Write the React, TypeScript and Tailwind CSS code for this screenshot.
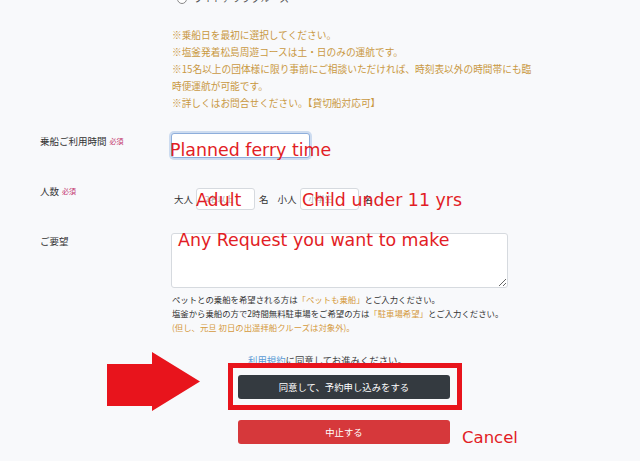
import React from 'react';

const jp = { fontFamily: '"Noto Sans CJK JP", "Noto Sans", sans-serif' };
const note = { fontFamily: '"DejaVu Sans", Verdana, sans-serif' };

const Label: React.FC<{ text: string; required?: boolean }> = ({ text, required }) => (
  <div className="flex items-center gap-[3px] text-[9.5px] leading-[17px] text-[#333]">
    <span>{text}</span>
    {required && <span className="text-[7px] text-[#c2336b]">必須</span>}
  </div>
);

export default function App() {
  return (
    <div className="min-h-screen bg-[#f8f9fb] overflow-hidden" style={jp}>
      <div className="grid grid-cols-[131px_1fr] pl-[40px]">
        {/* course radio + notes */}
        <div />
        <div>
          <div className="-mt-[10px] flex h-[17px] items-center gap-[6px] pl-[6px] text-[9.7px] leading-[17px] text-[#555]">
            <span className="inline-block h-[10px] w-[10px] rounded-full border border-[#888] bg-white" />
            <span>ライトアップクルーズ</span>
          </div>
          <div className="mt-[20px] pl-[1px] text-[9.7px] leading-[17px] text-[#c99842]">
            <p>※乗船日を最初に選択してください。</p>
            <p>※塩釜発着松島周遊コースは土・日のみの運航です。</p>
            <p>※15名以上の団体様に限り事前にご相談いただければ、時刻表以外の時間帯にも臨</p>
            <p>時便運航が可能です。</p>
            <p>※詳しくはお問合せください。【貸切船対応可】</p>
          </div>
        </div>

        {/* time */}
        <div className="mt-[21px]">
          <Label text="乗船ご利用時間" required />
        </div>
        <div className="mt-[21px]">
          <div className="relative w-[139px]">
            <div className="h-[25px] rounded-[3px] border border-[#8eaedb] bg-white shadow-[0_0_0_2px_#cddcf0]" />
            <span className="absolute left-[-1px] top-[7px] whitespace-nowrap text-[17.4px] leading-[20px] text-[#e21d25]" style={note}>
              Planned ferry time
            </span>
          </div>
        </div>

        {/* people */}
        <div className="mt-[25px]">
          <Label text="人数" required />
        </div>
        <div className="mt-[25px] pt-[5px]">
          <div className="relative flex items-center text-[9.5px] text-[#333]">
            <span className="ml-[3px]">大人</span>
            <div className="ml-[3px] flex h-[22px] w-[59px] items-center rounded-[3px] border border-[#d6dadf] bg-white pl-[8px] text-[8px] text-[#aaa]">2名以上</div>
            <span className="ml-[4px]">名</span>
            <span className="ml-[9px]">小人</span>
            <div className="ml-[3px] flex h-[22px] w-[59px] items-center rounded-[3px] border border-[#d6dadf] bg-white pl-[8px] text-[8px] text-[#aaa]">小学生</div>
            <span className="ml-[5px]">名</span>
            <span className="absolute left-[25px] top-[2px] whitespace-nowrap text-[17.4px] leading-[20px] text-[#e21d25]" style={note}>
              Adult
            </span>
            <span className="absolute left-[131px] top-[2px] whitespace-nowrap text-[17.4px] leading-[20px] text-[#e21d25]" style={note}>
              Child under 11 yrs
            </span>
          </div>
        </div>

        {/* request */}
        <div className="mt-[23px]">
          <Label text="ご要望" />
        </div>
        <div className="mt-[23px]">
          <div className="relative w-[337px]">
            <textarea className="block h-[55px] w-[337px] rounded-[3px] border border-[#d6dadf] bg-white" readOnly />
            <span className="absolute left-[7px] top-[-3px] whitespace-nowrap text-[17.4px] leading-[20px] text-[#e21d25]" style={note}>
              Any Request you want to make
            </span>
          </div>
          <div className="mt-[4px] pl-[1px] text-[8.4px] leading-[14px] text-[#333]">
            <p>
              ペットとの乗船を希望される方は<span className="text-[#d59a3e]">「ペットも乗船」</span>とご入力ください。
            </p>
            <p>
              塩釜から乗船の方で2時間無料駐車場をご希望の方は<span className="text-[#d59a3e]">「駐車場希望」</span>とご入力ください。
            </p>
            <p className="text-[#d59a3e]">(但し、元旦 初日の出遥拝船クルーズは対象外)。</p>
          </div>
        </div>

        {/* actions */}
        <div />
        <div className="pl-[67px]">
          <p className="mt-[18px] pl-[10px] text-[9.4px] leading-[16px] text-[#444]">
            <span className="text-[#5b9bd5]">利用規約</span>に同意してお進みください。
          </p>
          <div className="relative mt-[7px] w-[212px]">
            <button className="flex h-[24px] w-[212px] items-center justify-center rounded-[3px] bg-[#343a40] text-[9.4px] text-white">
              同意して、予約申し込みをする
            </button>
            <span className="pointer-events-none absolute -bottom-[11px] -left-[10px] -right-[12px] -top-[12px] border-[5px] border-[#e8141c]" />
            <svg className="absolute -left-[131px] -top-[23px]" width="93" height="59" viewBox="0 0 93 59">
              <polygon points="0,12 45,12 45,0 93,29.5 45,59 45,54 0,54" fill="#e8141c" />
            </svg>
          </div>
          <div className="relative mt-[21px] w-[212px]">
            <button className="flex h-[24px] w-[212px] items-center justify-center rounded-[3px] bg-[#d6383b] text-[9.4px] text-white">
              中止する
            </button>
            <span className="absolute left-[224px] top-[8px] whitespace-nowrap text-[16.5px] leading-[20px] text-[#e21d25]" style={note}>
              Cancel
            </span>
          </div>
        </div>
      </div>
    </div>
  );
}
